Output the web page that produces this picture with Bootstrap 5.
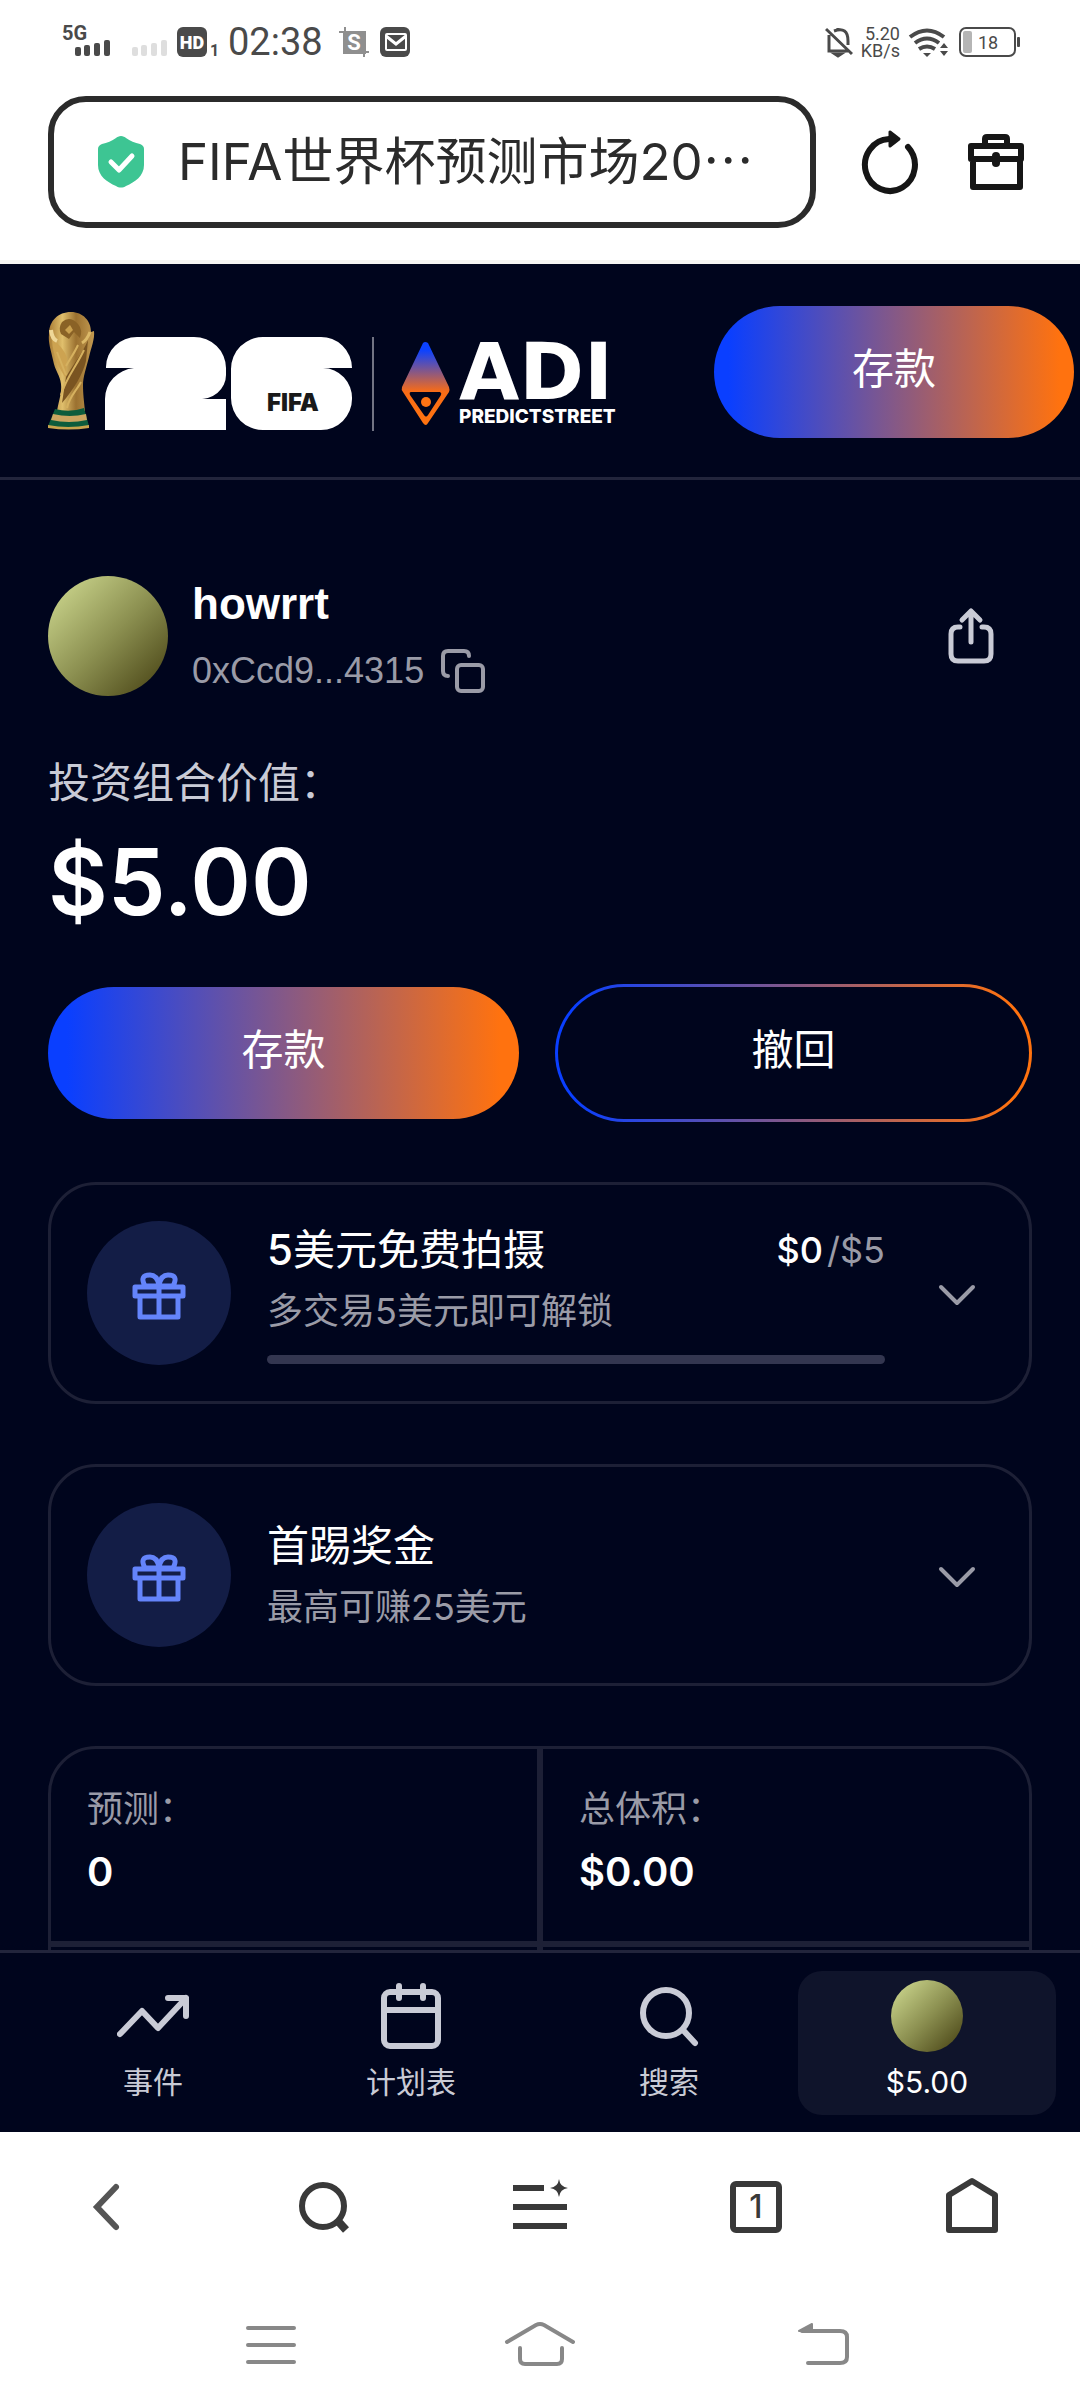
<!DOCTYPE html>
<html lang="zh-CN">
<head>
<meta charset="utf-8">
<meta name="viewport" content="width=device-width, initial-scale=1">
<title>ADI Predictstreet</title>
<link href="https://cdn.jsdelivr.net/npm/bootstrap@5.3.0/dist/css/bootstrap.min.css" rel="stylesheet">
<style>
:root{--ink:#00051d;--line:#1d2036;--soft:#c9cbd6;--dim:#9a9ba7;--brand:linear-gradient(90deg,#0a3fff 4%,#ff720f 96%)}
body{font-family:Inter,"Noto Sans CJK SC",sans-serif;background:#fff}
.app-shell{height:100vh}
svg{display:block;flex:none}
.status-bar{height:84px;padding:0 60px;color:#4a4a4a;font-family:Roboto,"Noto Sans CJK SC",sans-serif}
.status-time{font-size:38px;line-height:44px}
.status-rate{font-size:18px;line-height:17px}
.url-row{padding:12px 54px 32px 48px;border-bottom:4px solid #f6f6f2;gap:45px}
.url-box{height:132px;border:6px solid #2b2b2b;border-radius:38px;padding:0 24px 0 44px;gap:34px}
.url-input,.url-input:focus{font-size:51px;line-height:60px;color:#2b2b2b;background:none;border:0;box-shadow:none;padding:0;outline:0}
.dark-zone{flex:1 1 0;min-height:0;background:var(--ink);color:#fff}
.site-head{padding:42px 6px 39px 48px;border-bottom:3px solid #22253c}
.pill{height:132px;border-radius:66px;border:0;color:#fff;font-size:42px;line-height:48px;padding:0 0 6px;background:var(--brand)}
.pill-head{width:360px}
.pill-row{gap:36px}
.pill-grow{flex:1 1 0}
.pill-ring{flex:1 1 6px;padding:3px;border-radius:69px;background:var(--brand)}
.pill-ring .pill{background:var(--ink)}
.content{padding:96px 48px 0}
.profile{padding-right:36px}
.disc{border-radius:50%;background:linear-gradient(135deg,#c6d088 10%,#8b8f50 52%,#4e4a1a 92%);flex:none}
.disc-lg{width:120px;height:120px}
.disc-sm{width:72px;height:72px}
.name{font:700 44px/54px "Liberation Sans",sans-serif;margin:0 0 16px}
.addr{font:400 36px/48px "Liberation Sans",sans-serif;color:var(--dim)}
.plain{background:none;border:0;padding:0;color:inherit}
.worth-label{font-size:42px;line-height:54px;color:var(--soft);margin:60px 0 18px}
.worth{font-size:92px;line-height:108px;font-weight:600;margin-bottom:48px}
.panel{border:3px solid var(--line);border-radius:48px;padding:36px;margin-top:60px;gap:36px;color:#fff;background:none;width:100%;text-align:left}
.gift{width:144px;height:144px;border-radius:50%;background:#131d46;flex:none}
.t-title{font-size:42px;line-height:54px}
.t-title b{font-weight:500}
.t-sub{font-size:36px;line-height:48px;color:var(--dim)}
.t-title+.t-sub,.t-head+.t-sub{margin-top:10px}
.t-goal{font-size:36px;line-height:54px;color:var(--dim)}
.t-goal b{font-weight:500;color:#fff}
.panel .progress{height:9px;margin-top:20px;border-radius:5px;background:#333650}
.stats{margin-top:60px}
.stat-cell{border:3px solid var(--line);padding:36px;min-height:198px}
.stat-cell.tl{border-top-left-radius:48px}
.stat-cell.tr{border-top-right-radius:48px}
.t-value{font-size:40px;line-height:54px;font-weight:600;margin-top:12px}
.tabs-bar{background:var(--ink);border-top:3px solid #22253c;padding:18px 24px 17px;color:var(--soft)}
.tab-link{flex:1 1 0;height:144px;border-radius:24px;padding-top:9px;color:var(--soft);text-decoration:none;font-size:30px;line-height:36px;gap:12px}
.tab-link.active{background:#0f142b;color:#fff}
.tools{height:150px;color:#393939}
.tools>*,.sysnav>*{flex:1 1 0}
.tab-count{width:52px;height:52px;border:6px solid #393939;border-radius:6px;font:500 32px/40px Inter,sans-serif;color:#393939}
.sysnav{height:126px;padding:18px 135px 0;color:#888}
</style>
</head>
<body>
<div class="app-shell d-flex flex-column overflow-hidden">
  <div class="status-bar d-flex align-items-center justify-content-between flex-shrink-0">
    <div class="d-flex align-items-center">
      <svg width="160" height="44" viewBox="60 20 160 44" fill="#4a4a4a">
        <text x="62" y="40" font-family="Roboto" font-weight="700" font-size="20">5G</text>
        <rect x="75" y="47" width="6" height="9" rx="2"/><rect x="84" y="45" width="6" height="11" rx="2"/><rect x="94" y="43" width="6" height="13" rx="2"/><rect x="104" y="40" width="6" height="16" rx="2"/>
        <g fill="#dedede"><rect x="132" y="47" width="6" height="9" rx="2"/><rect x="141" y="45" width="6" height="11" rx="2"/><rect x="151" y="43" width="6" height="13" rx="2"/><rect x="161" y="40" width="6" height="16" rx="2"/></g>
        <rect x="177" y="27" width="30" height="30" rx="6"/>
        <text x="192" y="49" font-family="Roboto" font-weight="900" font-size="18" fill="#fff" text-anchor="middle">HD</text>
        <text x="210" y="56" font-family="Roboto" font-weight="700" font-size="16">1</text>
      </svg>
      <span class="status-time ms-2">02:38</span>
      <svg class="ms-3" width="72" height="32" viewBox="340 26 72 32">
        <path d="M344 31h23v23h-23z" fill="#8f8f8f"/><path d="M346 27v8M340 32h8M365 48v9M362 52h8" stroke="#8f8f8f" stroke-width="2"/>
        <text x="355" y="50" font-family="Roboto" font-weight="700" font-size="22" fill="#fff" text-anchor="middle">S</text>
        <rect x="381" y="27" width="30" height="30" rx="6" fill="#4a4a4a"/>
        <rect x="387" y="34" width="20" height="16" rx="1" fill="none" stroke="#fff" stroke-width="2"/><path d="M387 36l10 8 10-8" fill="none" stroke="#fff" stroke-width="3"/>
      </svg>
    </div>
    <div class="d-flex align-items-center gap-2">
      <svg width="28" height="32" viewBox="825 27 28 32" fill="none" stroke="#4a4a4a" stroke-width="3">
        <path d="M829 36v16h19M834 32q14-5 14 10v4M826 30l26 25"/><path d="M838 30v-1M835 55h6l-3 2z"/>
      </svg>
      <div class="status-rate text-end">5.20<br>KB/s</div>
      <svg width="42" height="32" viewBox="909 26 42 32" fill="none" stroke="#4a4a4a" stroke-width="4">
        <path d="M911 37q17-13 34 0M916 43q12-9 24 0M920 49q8-5 16 0"/><path d="M924 53h8l-4 4z" fill="#4a4a4a" stroke="none"/><path d="M941 48l4-5 4 5zM941 51l4 5 4-5z" fill="#4a4a4a" stroke="none"/>
      </svg>
      <svg width="62" height="32" viewBox="959 26 62 32">
        <rect x="961" y="28" width="55" height="28" rx="6" fill="none" stroke="#4a4a4a" stroke-width="2"/><rect x="964" y="31" width="9" height="22" rx="2" fill="#b5b5b5"/><rect x="1018" y="37" width="3" height="10" rx="1" fill="#4a4a4a"/>
        <text x="989" y="49" font-family="Roboto" font-size="18" fill="#4a4a4a" text-anchor="middle">18</text>
      </svg>
    </div>
  </div>

  <div class="url-row d-flex align-items-center flex-shrink-0">
    <label class="url-box d-flex align-items-center flex-grow-1">
      <svg width="46" height="52" viewBox="0 0 46 52"><path d="M23 0c2 0 4 1 5 2 4 3 9 5 14 6 3 1 4 3 4 5v16c0 11-9 17-18 21-3 2-7 2-10 0C9 46 0 40 0 29V13c0-2 1-4 4-5C9 7 14 5 18 2c1-1 3-2 5-2z" fill="#3dc593"/><path d="M13 26l8 8 13-14" fill="none" stroke="#fff" stroke-width="5" stroke-linecap="round" stroke-linejoin="round"/></svg>
      <input class="form-control url-input flex-grow-1" type="text" aria-label="网址" value="FIFA世界杯预测市场20⋯">
    </label>
    <button class="plain" type="button" aria-label="刷新">
      <svg width="60" height="66" viewBox="860 128 60 66" fill="none" stroke="#161616" stroke-width="6" stroke-linecap="round"><path d="M907 146a25 26 0 1 1-19-8"/><path d="M889 131v14l9-7z" fill="#161616" stroke-width="3" stroke-linejoin="round"/></svg>
    </button>
    <button class="plain" type="button" aria-label="工具箱">
      <svg width="60" height="66" viewBox="966 128 60 66" fill="none" stroke="#161616" stroke-width="6" stroke-linejoin="round"><path d="M971 145h50v13h-50zM973 158v28h47v-28M985 144v-6q0-2 2-2h18q2 0 2 2v6"/><path d="M996 155v7" stroke-width="8" stroke-linecap="round"/></svg>
    </button>
  </div>

  <div class="dark-zone overflow-hidden">
    <header class="site-head d-flex align-items-center justify-content-between">
      <a href="#" aria-label="FIFA 26 ADI Predictstreet">
      <svg width="572" height="120" viewBox="48 312 572 120">
        <defs>
          <linearGradient id="gold" x1="0" x2="1"><stop offset="0" stop-color="#a87c35"/><stop offset=".3" stop-color="#e0bf6c"/><stop offset=".6" stop-color="#9b7130"/><stop offset="1" stop-color="#c39a50"/></linearGradient>
          <linearGradient id="gem" x1="0" y1="0" x2="0" y2="1"><stop offset=".1" stop-color="#0c42ff"/><stop offset=".6" stop-color="#f96c16"/><stop offset="1" stop-color="#ff7410"/></linearGradient>
        </defs>
        <path d="M71 312c12 0 20 9 20 20l3-1c1 8-3 17-5 26-3 12-6 20-6 28 0 9 1 16 2 26H57c2-11 5-19 4-27-1-9-6-13-8-24-2-10-5-17-4-26 0-13 9-22 22-22z" fill="url(#gold)"/>
        <path d="M62 322q8-7 16 2 5 6 2 14l-6-6-5 7-8-5q-3-6 1-12z" fill="#8a6226"/><path d="M70 325l3 5-4 4-4-4z" fill="#c9a04f"/><path d="M52 340c6 3 12 9 15 18l-1 20c-7-9-13-22-14-38z" fill="#cda351"/><path d="M88 340c-5 12-13 22-22 37l-4 26c12-14 21-29 24-42z" fill="#7a5421"/><path d="M84 350c-8 17-18 28-23 45M78 345c-4 9-9 15-12 21M57 352l9 23M67 408c2-11 10-18 14-26" stroke="#d6b15f" stroke-width="2" fill="none"/><path d="M51 330q1 9 6 11" stroke="#efd898" stroke-width="4" fill="none"/><path d="M90 332q-3 8-8 11" stroke="#dcb968" stroke-width="3" fill="none"/>
        <path d="M55 409q15 4 29-1l5 18q-20 5-41 0z" fill="#0d5c3c"/><path d="M53 414q17 4 33 0l1 6q-18 4-36 0z" fill="#cba560"/><path d="M48 425q20 4 41 0v3q-20 3-41 0z" fill="#c9a44d"/>
        <g fill="#fff">
          <path d="M106 368v-1a31 30 0 0 1 31-30h57a32 31 0 0 1 32 31v7a26 24 0 0 1-29 24h29v31H105v-31a32 31 0 0 1 29-31z"/>
          <path d="M231 369a32 32 0 0 1 32-32h57a31 31 0 0 1 32 31h-29a29 30 0 0 1 29 31 31 31 0 0 1-31 31h-58a32 32 0 0 1-32-32z"/>
        </g>
        <text x="293" y="411" font-family="Inter" font-weight="900" font-size="24" fill="#191919" text-anchor="middle">FIFA</text>
        <path d="M373 337v94" stroke="#e4e4ea" stroke-width="1"/>
        <path d="M423 343q2-2 5 0l21 44q1 3 0 5l-21 31q-2 4-5 0l-20-31q-2-2-1-5z" fill="url(#gem)"/>
        <path d="M411 392h29q2 1 1 3l-13 20q-2 3-4 0l-14-20q-1-3 1-3z" fill="#00051d"/><circle cx="426" cy="402" r="5" fill="#ff7414"/>
        <text x="459" y="399" font-family="DejaVu Sans" font-weight="700" font-size="78" fill="#fff">ADI</text>
        <text x="459" y="423" font-family="Inter" font-weight="800" font-size="19" fill="#fff">PREDICTSTREET</text>
      </svg>
      </a>
      <button class="btn pill pill-head" type="button">存款</button>
    </header>

    <main class="content">
      <section class="profile d-flex align-items-center">
        <div class="disc disc-lg"></div>
        <div class="flex-grow-1 ms-4">
          <h1 class="name">howrrt</h1>
          <div class="d-flex align-items-center addr gap-3">
            <span>0xCcd9...4315</span>
            <button class="plain" type="button" aria-label="复制">
              <svg width="46" height="46" viewBox="441 649 46 46" fill="none" stroke="currentColor" stroke-width="4" stroke-linecap="round"><path d="M449 677q-5 0-5-5v-15q0-5 5-5h16q5 0 5 5"/><rect x="458" y="666" width="26" height="26" rx="4"/></svg>
            </button>
          </div>
        </div>
        <button class="plain" type="button" aria-label="分享">
          <svg width="50" height="58" viewBox="947 607 50 58" fill="none" stroke="#c9cbd6" stroke-width="5" stroke-linecap="round" stroke-linejoin="round"><path d="M961 627h-2q-7 0-7 7v20q0 7 7 7h26q7 0 7-7v-20q0-7-7-7h-2M972 642v-31M963 620l9-9 9 9"/></svg>
        </button>
      </section>

      <div class="worth-label">投资组合价值：</div>
      <div class="worth">$5.00</div>

      <div class="pill-row d-flex align-items-center">
        <button class="btn pill pill-grow" type="button">存款</button>
        <div class="pill-ring d-flex"><button class="btn pill w-100" type="button">撤回</button></div>
      </div>

      <button class="panel d-flex align-items-center" type="button" aria-expanded="false">
        <span class="gift d-flex align-items-center justify-content-center">
          <svg width="60" height="60" viewBox="129 1263 60 60" fill="none" stroke="#6484fb" stroke-width="5" stroke-linejoin="round"><path d="M135 1287h48v9h-48zM140 1296h38v21h-38zM159 1287v30M159 1286h-14q-6-11 5-11 7 0 9 10 2-10 9-10 11 0 5 11z"/></svg>
        </span>
        <span class="flex-grow-1">
          <span class="t-head d-flex justify-content-between"><span class="t-title"><b>5</b>美元免费拍摄</span><span class="t-goal"><b class="me-1">$0</b>/$5</span></span>
          <span class="t-sub d-block">多交易5美元即可解锁</span>
          <span class="progress d-block" role="progressbar" aria-label="进度" aria-valuenow="0" aria-valuemin="0" aria-valuemax="5"><span class="progress-bar" style="width:0%"></span></span>
        </span>
        <svg width="72" height="72" viewBox="0 0 72 72" fill="none" stroke="#9a9ba7" stroke-width="4" stroke-linecap="round" stroke-linejoin="round"><path d="M20 30l16 16 16-16"/></svg>
      </button>

      <button class="panel d-flex align-items-center" type="button" aria-expanded="false">
        <span class="gift d-flex align-items-center justify-content-center">
          <svg width="60" height="60" viewBox="129 1263 60 60" fill="none" stroke="#6484fb" stroke-width="5" stroke-linejoin="round"><path d="M135 1287h48v9h-48zM140 1296h38v21h-38zM159 1287v30M159 1286h-14q-6-11 5-11 7 0 9 10 2-10 9-10 11 0 5 11z"/></svg>
        </span>
        <span class="flex-grow-1">
          <span class="t-title d-block">首踢奖金</span>
          <span class="t-sub d-block">最高可赚25美元</span>
        </span>
        <svg width="72" height="72" viewBox="0 0 72 72" fill="none" stroke="#9a9ba7" stroke-width="4" stroke-linecap="round" stroke-linejoin="round"><path d="M20 30l16 16 16-16"/></svg>
      </button>

      <div class="stats row g-0">
        <div class="col-6 stat-cell tl"><div class="t-sub">预测：</div><div class="t-value">0</div></div>
        <div class="col-6 stat-cell tr"><div class="t-sub">总体积：</div><div class="t-value">$0.00</div></div>
        <div class="col-6 stat-cell"></div>
        <div class="col-6 stat-cell"></div>
      </div>
    </main>
  </div>

  <nav class="tabs-bar d-flex flex-shrink-0">
    <a class="tab-link d-flex flex-column align-items-center" href="#"><svg width="72" height="72" viewBox="0 0 72 72" fill="none" stroke="currentColor" stroke-width="6" stroke-linecap="round" stroke-linejoin="round"><path d="M3 54l22-23 16 17 28-30M51 18h18v18"/></svg>事件</a>
    <a class="tab-link d-flex flex-column align-items-center" href="#"><svg width="72" height="72" viewBox="0 0 72 72" fill="none" stroke="currentColor" stroke-width="6" stroke-linecap="round"><rect x="9" y="12" width="54" height="54" rx="6"/><path d="M9 30h54M24 6v12M48 6v12"/></svg>计划表</a>
    <a class="tab-link d-flex flex-column align-items-center" href="#"><svg width="72" height="72" viewBox="0 0 72 72" fill="none" stroke="currentColor" stroke-width="6" stroke-linecap="round"><circle cx="33" cy="33" r="23"/><path d="M50 50l12 13"/></svg>搜索</a>
    <a class="tab-link active d-flex flex-column align-items-center" href="#"><span class="disc disc-sm"></span>$5.00</a>
  </nav>

  <nav class="tools d-flex align-items-center flex-shrink-0">
    <button class="plain d-flex justify-content-center" type="button" aria-label="后退"><svg width="60" height="60" viewBox="0 0 60 60" fill="none" stroke="#555" stroke-width="6" stroke-linecap="round"><path d="M38 10L19 30l19 20"/></svg></button>
    <button class="plain d-flex justify-content-center" type="button" aria-label="搜索"><svg width="60" height="60" viewBox="0 0 60 60" fill="none" stroke="currentColor" stroke-width="6"><circle cx="29" cy="29" r="21"/><path d="M43 43l9 10" stroke-width="8"/></svg></button>
    <button class="plain d-flex justify-content-center" type="button" aria-label="菜单"><svg width="60" height="60" viewBox="0 0 60 60" fill="none" stroke="currentColor" stroke-width="6"><path d="M3 11h31M3 30h54M3 49h54"/><path d="M49 2q1 8 9 9-8 1-9 9-1-8-9-9 8-1 9-9z" fill="currentColor" stroke="none"/></svg></button>
    <div class="d-flex justify-content-center"><button class="plain tab-count d-block" type="button" aria-label="标签页">1</button></div>
    <button class="plain d-flex justify-content-center" type="button" aria-label="主页"><svg width="60" height="60" viewBox="0 0 60 60" fill="none" stroke="currentColor" stroke-width="6" stroke-linejoin="round"><path d="M7 53V18L30 4l23 14v35z"/></svg></button>
  </nav>

  <nav class="sysnav d-flex align-items-start flex-shrink-0">
    <button class="plain d-flex justify-content-center" type="button" aria-label="最近任务"><svg width="100" height="80" viewBox="0 0 100 80" fill="none" stroke="currentColor" stroke-width="4" stroke-linecap="round"><path d="M28 28h46M28 45h46M28 62h46"/></svg></button>
    <button class="plain d-flex justify-content-center" type="button" aria-label="桌面"><svg width="100" height="80" viewBox="0 0 100 80" fill="none" stroke="currentColor" stroke-width="4" stroke-linecap="round"><path d="M17 42l29-17q4-2 8 0l29 17M30 48v11q0 5 5 5h32q5 0 5-5V48"/></svg></button>
    <button class="plain d-flex justify-content-center" type="button" aria-label="返回"><svg width="100" height="80" viewBox="0 0 100 80" fill="none" stroke="currentColor" stroke-width="4" stroke-linecap="round" stroke-linejoin="round"><path d="M42 31h38q7 0 7 6v20q0 6-7 6H48"/><path d="M39 31l13-7v7z" fill="currentColor" stroke-width="2"/></svg></button>
  </nav>
</div>
<script src="https://cdn.jsdelivr.net/npm/bootstrap@5.3.0/dist/js/bootstrap.bundle.min.js"></script>
</body>
</html>
